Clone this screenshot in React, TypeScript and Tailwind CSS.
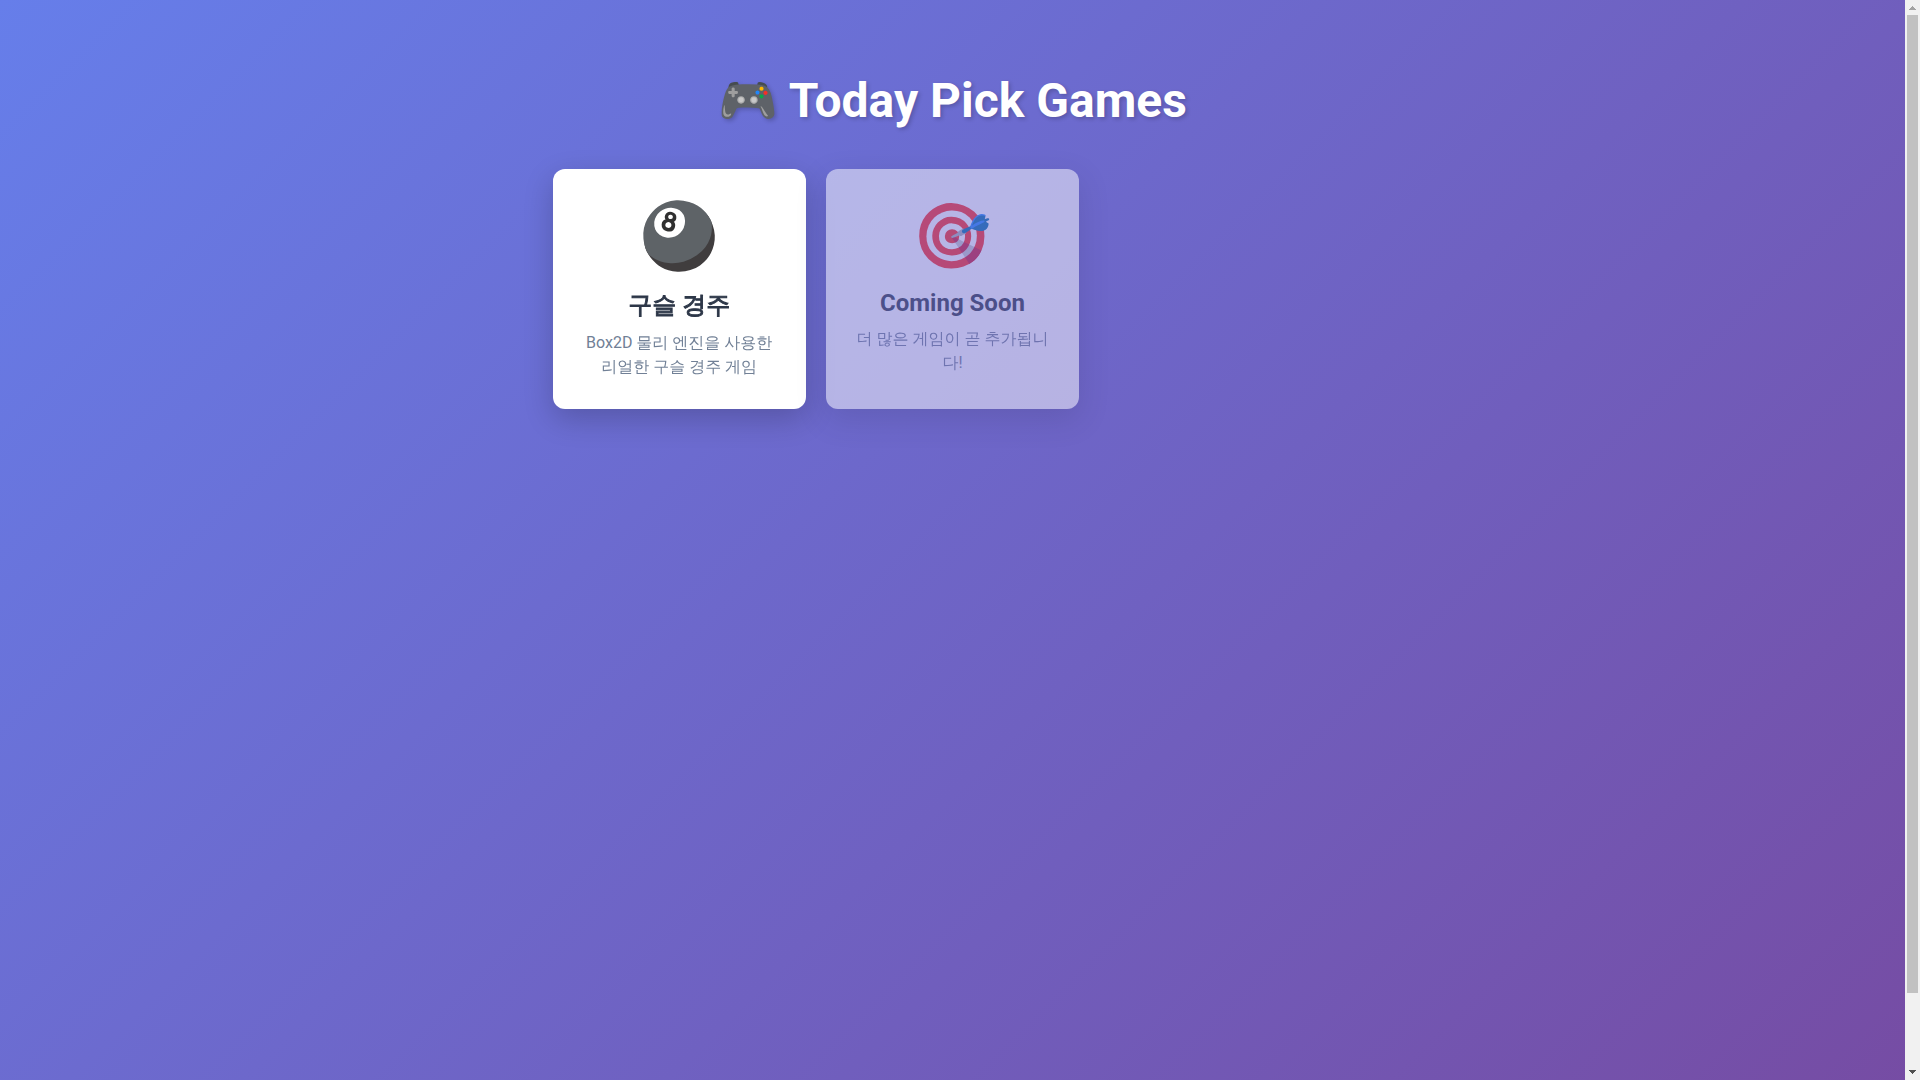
interface Game {
  icon: string;
  title: string;
  titleClass?: string;
  description: string;
  href?: string;
}

const games: Game[] = [
  {
    icon: '🎱',
    title: '구슬 경주',
    // the Hangul face has no bold weight, so thicken it with a stroke
    titleClass: '[-webkit-text-stroke:1px_#2d3748]',
    description: 'Box2D 물리 엔진을 사용한 리얼한 구슬 경주 게임',
    href: '#marble-race',
  },
  {
    icon: '🎯',
    title: 'Coming Soon',
    description: '더 많은 게임이 곧 추가됩니다!',
  },
];

function GameCard({ game }: { game: Game }) {
  const content = (
    <>
      <div className="mb-[15px] text-[64px] leading-[75px]">{game.icon}</div>
      <h3 className={`mb-[10px] text-2xl leading-[normal] font-bold text-[#2d3748] ${game.titleClass ?? ''}`}>
        {game.title}
      </h3>
      <p className="text-base text-[#718096]">{game.description}</p>
    </>
  );

  const base = 'block rounded-[12px] bg-white p-[30px] text-center shadow-[0_10px_30px_rgba(0,0,0,0.2)]';

  if (!game.href) {
    return <div className={`${base} opacity-50`}>{content}</div>;
  }

  return (
    <a href={game.href} className={`${base} transition-transform duration-300 hover:-translate-y-1`}>
      {content}
    </a>
  );
}

function ScrollTrack() {
  return (
    <div aria-hidden="true" className="flex w-[15px] shrink-0 flex-col items-center bg-[#f1f1f1]">
      <svg className="h-[15px] w-[15px]" viewBox="0 0 15 15" shapeRendering="crispEdges">
        <path d="M7 6h1v1h1v1h1v1h1v1H4V9h1V8h1V7h1z" fill="#a3a3a3" />
      </svg>
      <div className="flex w-full grow flex-col px-[2px]">
        <div className="grow-[978] basis-0 bg-[#c1c1c1]" />
        <div className="grow-[72] basis-0" />
      </div>
      <svg className="h-[15px] w-[15px]" viewBox="0 0 15 15" shapeRendering="crispEdges">
        <path d="M4 5h7v1h-1v1H9v1H8v1H7V8H6V7H5V6H4z" fill="#505050" />
      </svg>
    </div>
  );
}

export default function App() {
  return (
    <div className="flex min-h-screen font-[Roboto,'WenQuanYi_Zen_Hei','Noto_Sans_CJK_KR',sans-serif]">
      <div className="grow bg-[linear-gradient(135deg,#667eea_0%,#764ba2_100%)] bg-[length:100%_calc(100%+80px)] py-10">
        <main className="mx-auto max-w-[800px] pt-8">
          <h1 className="mb-10 text-center text-5xl leading-[57px] font-bold text-white [text-shadow:2px_2px_4px_rgba(0,0,0,0.2)]">
            🎮 Today Pick Games
          </h1>
          <div className="grid grid-cols-[repeat(auto-fill,minmax(250px,1fr))] gap-5">
            {games.map((game) => (
              <GameCard key={game.title} game={game} />
            ))}
          </div>
        </main>
      </div>
      <ScrollTrack />
    </div>
  );
}
